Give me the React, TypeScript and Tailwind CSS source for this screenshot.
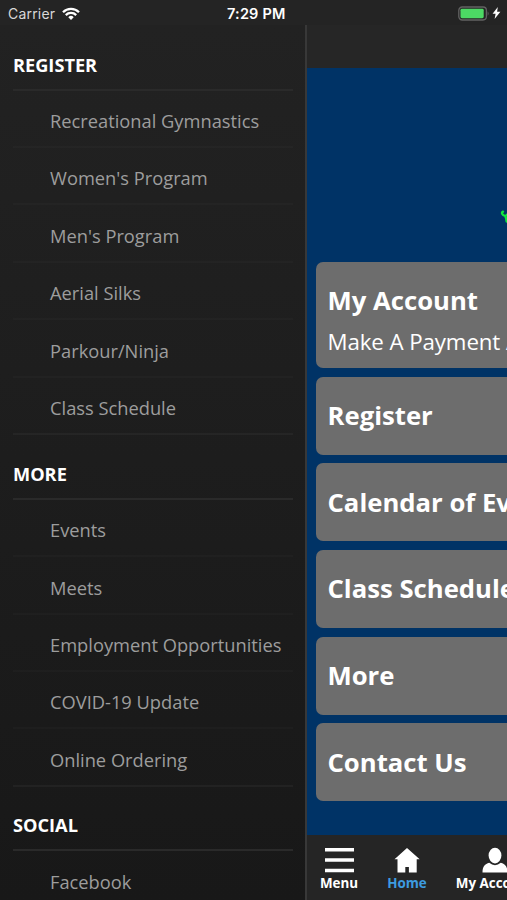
import { ReactNode } from 'react';

const sections = [
  {
    title: 'REGISTER',
    items: ['Recreational Gymnastics', "Women's Program", "Men's Program", 'Aerial Silks', 'Parkour/Ninja', 'Class Schedule'],
  },
  {
    title: 'MORE',
    items: ['Events', 'Meets', 'Employment Opportunities', 'COVID-19 Update', 'Online Ordering'],
  },
  { title: 'SOCIAL', items: ['Facebook'] },
];

const cards = ['Register', 'Calendar of Events', 'Class Schedule', 'More', 'Contact Us'];

function StatusBar() {
  return (
    <div className="flex h-[25px] shrink-0 items-center bg-[#242424] pt-[2px] pl-2 pr-[6px] font-['Inter','Liberation_Sans',sans-serif] text-[14px] text-[#d8d8d8]">
      <div className="flex w-[219px] items-center gap-[7px]">
        <span className="tracking-[0.2px]">Carrier</span>
        <svg width="18" height="14" viewBox="0 0 18 14" fill="none" stroke="#fff" strokeWidth="2.3">
          <path d="M1 5.2a11.4 11.4 0 0 1 16 0" />
          <path d="M3.8 8.1a7.4 7.4 0 0 1 10.4 0" />
          <path d="M9 13l-2.7-2.8a3.8 3.8 0 0 1 5.4 0z" fill="#fff" stroke="none" />
        </svg>
      </div>
      <span className="grow whitespace-nowrap text-[14.5px] font-semibold tracking-[0.2px] text-white">7:29 PM</span>
      <svg className="mb-[1px]" width="32" height="15" viewBox="0 0 32 15">
        <rect x="0.8" y="1" width="27.6" height="13" rx="3.4" fill="none" stroke="#626262" strokeWidth="1.3" />
        <rect x="2.5" y="2.8" width="23.2" height="9.4" rx="1.4" fill="#4cd964" />
        <path d="M29.6 5.2q2 2.3 0 4.6z" fill="#626262" />
      </svg>
      <svg className="mb-[1px] ml-[2px]" width="9" height="12" viewBox="0 0 9 12">
        <path d="M5.8 0L0.6 6.8h3L2.6 12l5.8-7.2H5.1z" fill="#fff" />
      </svg>
    </div>
  );
}

function SideMenu() {
  return (
    <nav className="w-[307px] shrink-0 overflow-hidden border-r-2 border-[#383838] bg-linear-to-b from-[#222222] to-[#181818] pl-[13px] pr-3 pt-[1px]">
      {sections.map((section) => (
        <div key={section.title}>
          <h2 className="flex h-[64.5px] items-center border-b-2 border-[#2a2a2a] pt-[16px] text-[18.2px] font-bold text-white">
            {section.title}
          </h2>
          {section.items.map((item) => (
            <div
              key={item}
              className="flex h-[57.45px] items-center whitespace-nowrap border-b-2 border-white/2 pl-[37px] pt-[5px] text-[18.3px] text-[#9d9d9d] last:border-white/4"
            >
              {item}
            </div>
          ))}
        </div>
      ))}
    </nav>
  );
}

function Tab({ label, className, children }: { label: string; className: string; children: ReactNode }) {
  return (
    <div className={`flex shrink-0 flex-col items-center whitespace-nowrap text-[13.4px] font-bold leading-[18px] ${className}`}>
      <div className="flex h-[39px] items-end pb-[1px]">{children}</div>
      {label}
    </div>
  );
}

export default function App() {
  return (
    <div className="flex h-[900px] w-[507px] flex-col overflow-hidden bg-[#242424] font-['Open_Sans','Noto_Sans',sans-serif]">
      <StatusBar />
      <div className="flex min-h-0 grow">
        <SideMenu />
        <div className="flex w-[200px] flex-col overflow-hidden bg-[#003366]">
          <div className="h-[43px] shrink-0 bg-[#262626]" />
          <div className="flex h-[194px] shrink-0 justify-end pt-[141px]">
            <svg width="7" height="16" viewBox="0 0 7 16" fill="none" stroke="#0fe83c" strokeWidth="2.3" strokeLinecap="round">
              <path d="M3 2.6C1.2 3.4 2 6.6 5 6.8Q6.6 7 7 5.6M5.4 7.5Q6.4 9.5 6.6 12.5" />
            </svg>
          </div>
          <div className="ml-[8.5px] flex w-[320px] grow flex-col gap-[8.5px] text-white">
            <div className="flex h-[106px] shrink-0 flex-col rounded-[7px] bg-[#6d6d6d] pl-3 pt-[21px] whitespace-nowrap">
              <h3 className="text-[25.7px] font-bold leading-9">My Account</h3>
              <p className="mt-[5px] text-[22.3px] leading-9 tracking-[-0.1px]">Make A Payment And More</p>
            </div>
            {cards.map((card) => (
              <div key={card} className="flex h-[78.2px] shrink-0 items-center whitespace-nowrap rounded-[7px] bg-[#6d6d6d] pl-3 pt-[1px] text-[25.7px] font-bold">
                {card}
              </div>
            ))}
          </div>
          <div className="flex h-[65px] shrink-0 bg-[#252525] text-white">
            <Tab label="Menu" className="ml-[-2px] w-[68px]">
              <svg width="29" height="26" viewBox="0 0 29 26">
                <path d="M0 1h29v3.5H0zM0 11.3h29v3.5H0zM0 21.8h29v3.5H0z" fill="#fff" />
              </svg>
            </Tab>
            <Tab label="Home" className="w-[68px] text-[#3d9be0]">
              <svg width="26" height="26" viewBox="0 0 26 26">
                <path d="M13 1L0.5 12.3h3V25.5h7.8V20h3.6v5.5h7.8V12.3h3z" fill="#fff" />
              </svg>
            </Tab>
            <Tab label="My Account" className="ml-[15px] w-[78px]">
              <svg width="26" height="26" viewBox="0 0 26 26">
                <ellipse cx="13" cy="8.6" rx="6.4" ry="7.8" fill="#fff" />
                <path d="M0.5 25.5C0.5 19.5 3 17 7.2 15.8Q13 20.5 18.8 15.8C23 17 25.5 19.5 25.5 25.5z" fill="#fff" />
              </svg>
            </Tab>
          </div>
        </div>
      </div>
    </div>
  );
}
